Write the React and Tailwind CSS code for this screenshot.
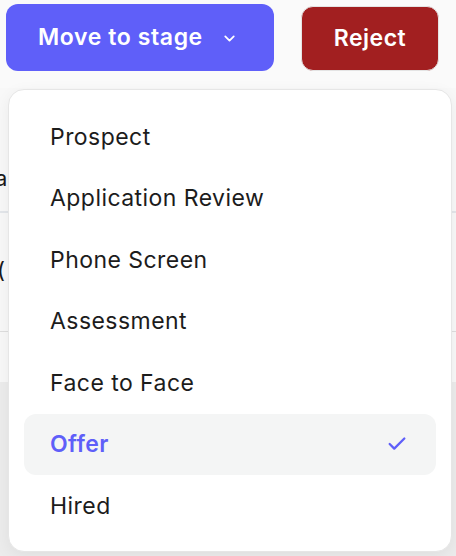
import React from 'react'
import { Check, ChevronDown } from 'lucide-react'

const stages = ["Prospect", "Application Review", "Phone Screen", "Assessment", "Face to Face", "Offer", "Hired"]

const App = () => {
  const current = "Offer"

  return (
    <div className="relative w-[456px] h-[556px] overflow-hidden bg-[#ececec] font-['Inter',sans-serif]">
      {/* Top bar with actions */}
      <div className="h-[88px] bg-[#fafafa] flex items-start gap-[27px] pl-[6px] pt-[4px]">
        <button className="w-[268px] h-[67px] rounded-[12px] bg-[#5f5ff9] text-white text-[23px] tracking-[0.6px] font-semibold flex items-center pl-[32px]">
          Move to stage
          <ChevronDown className="ml-[18px] mt-[2px]" size={17} strokeWidth={2.5} />
        </button>
        <button className="mt-[2px] w-[138px] h-[65px] rounded-[12px] bg-[#a21f20] border border-[#e4e4e4] text-white text-[23px] tracking-[0.5px] font-semibold">
          Reject
        </button>
      </div>

      {/* Underlying list, mostly hidden by the menu */}
      <div className="h-[294px] bg-[#f8f8f8] text-[22px] text-[#1a1a1a]">
        <div className="h-[125px] border-b-2 border-[#e3e6ea] flex items-center">
          <span className="-ml-[5px] mt-[58px]">a</span>
        </div>
        <div className="h-[119px] border-b border-[#dedede] flex items-center">
          <span className="-ml-[3px] -mt-[4px]">(</span>
        </div>
      </div>

      {/* Stage menu */}
      <div className="absolute left-[8px] top-[89px] w-[444px] h-[463px] bg-white rounded-[16px] border border-[#e6e6e6] shadow-[0_4px_16px_rgba(0,0,0,0.06)] px-[15px] pt-[16px]">
        {stages.map((stage) => (
          stage === current ? (
            <div key={stage} className="h-[61.5px] rounded-[12px] bg-[#f4f5f5] flex items-center justify-between pl-[26px] pr-[28px] text-[23px] tracking-[0.4px] font-semibold text-[#5f5ff9]">
              <span>{stage}</span>
              <Check size={22} strokeWidth={2.5} />
            </div>
          ) : (
            <div key={stage} className="h-[61.5px] flex items-center pl-[26px] text-[23px] text-[#1c1c1c] tracking-[0.45px]">
              {stage}
            </div>
          )
        ))}
      </div>
    </div>
  )
}

export default App
